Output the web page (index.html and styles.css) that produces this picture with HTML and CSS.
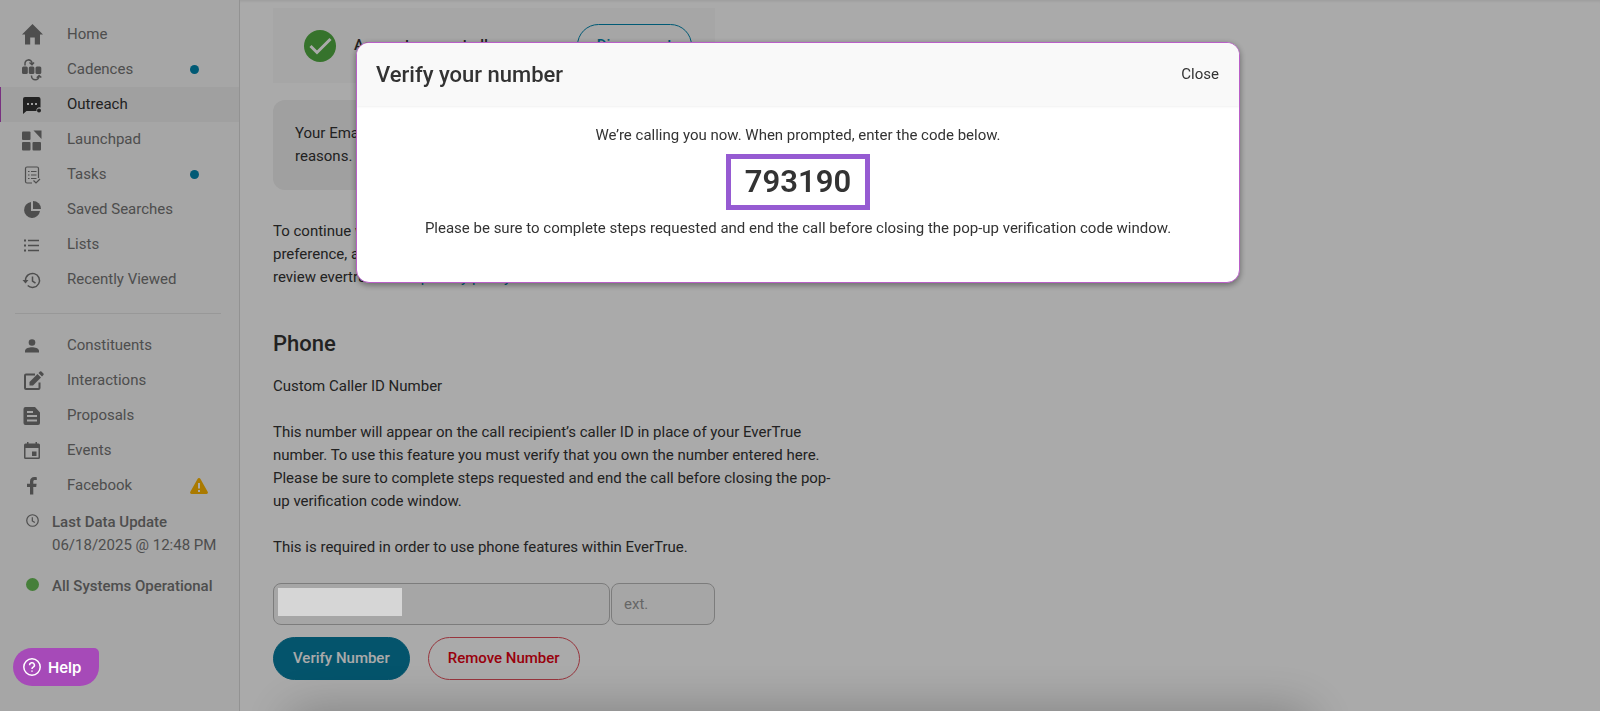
FILE: index.html
```html
<!DOCTYPE html>
<html lang="en">
<head>
    <meta charset="UTF-8">
    <meta name="viewport" content="width=device-width, initial-scale=1.0">
    <title>Outreach Settings</title>
    <link rel="stylesheet" href="styles.css">
</head>
<body>
    <div class="app">
        <aside class="sidebar">
            <nav>
                <a class="nav-item" href="#home">
                    <svg class="icon" viewBox="0 0 24 24"><path d="M12.500 1 2 11.500h3V21.500h5.200v-7h4.600v7H20V11.500h3z"/></svg>
                    <span>Home</span>
                </a>
                <a class="nav-item" href="#cadences">
                    <svg class="icon" viewBox="0 0 24 24">
                        <rect x="2" y="8.500" width="5.800" height="7.500" rx="1.500"/>
                        <rect x="8.800" y="8.500" width="5.600" height="7.500" rx="1.500"/>
                        <rect x="15.500" y="8.500" width="5.800" height="7.500" rx="1.500"/>
                        <path class="line thick" d="M5 7.500V5.800a3.500 3.500 0 0 1 7-.8v1M9.500 4.500 12 6.800l2-2.300M11.500 17.500v.5a3.800 3.800 0 0 0 7.600 0v-.5M16.800 19.800l2.300-2.300 2.200 2"/>
                    </svg>
                    <span>Cadences</span>
                    <i class="dot"></i>
                </a>
                <a class="nav-item active" href="#outreach">
                    <svg class="icon" viewBox="0 0 24 24">
                        <path d="M5 4h13.500a2 2 0 0 1 2 2v8.500a3 3 0 0 0-4 3.500H6.500L3 21V6a2 2 0 0 1 2-2z"/>
                        <circle cx="19" cy="17.500" r="2"/>
                        <path class="hole" d="M7 10h2v2H7zM11 10h2v2h-2zM15 10h2v2h-2z"/>
                    </svg>
                    <span>Outreach</span>
                </a>
                <a class="nav-item" href="#launchpad">
                    <svg class="icon" viewBox="0 0 24 24">
                        <rect x="2" y="3.500" width="8.500" height="8.500" rx="1"/>
                        <rect x="2" y="14" width="8.500" height="8.500" rx="1"/>
                        <rect x="12.500" y="14" width="8.500" height="8.500" rx="1"/>
                        <path d="M13.500 2.500H21.500V11z"/>
                    </svg>
                    <span>Launchpad</span>
                </a>
                <a class="nav-item" href="#tasks">
                    <svg class="icon" viewBox="0 0 24 24">
                        <path class="line" d="M18.500 15V5.500a1.500 1.500 0 0 0-1.500-1.500H7A1.500 1.500 0 0 0 5.500 5.500v13A1.500 1.500 0 0 0 7 20h5M8 8.500h1.500M11 8.500h5.500M8 12h1.500M11 12h5.500M8 15.500h1.500M11 15.500h5.500M13.500 17.500l2.500 2.500 4-4"/>
                    </svg>
                    <span>Tasks</span>
                    <i class="dot"></i>
                </a>
                <a class="nav-item" href="#saved">
                    <svg class="icon" viewBox="0 0 24 24"><path d="M11 4v9h9a8 8 0 1 1-9-9z"/><path d="M13 3a8 8 0 0 1 8 8h-8z"/></svg>
                    <span>Saved Searches</span>
                </a>
                <a class="nav-item" href="#lists">
                    <svg class="icon" viewBox="0 0 24 24"><path d="M4 6.500h2v2H4zM4 11.500h2v2H4zM4 16.500h2v2H4zM8 6.750h11v1.500H8zM8 11.750h11v1.500H8zM8 16.750h11v1.500H8z"/></svg>
                    <span>Lists</span>
                </a>
                <a class="nav-item" href="#recent">
                    <svg class="icon" viewBox="0 0 24 24">
                        <path class="line thick" d="M5.500 12.500a7 7 0 1 1 2.200 5M12.500 8.500V13l3 2.200"/>
                        <path d="M2.500 12h6l-3 3.500z"/>
                    </svg>
                    <span>Recently Viewed</span>
                </a>
                <hr class="divider">
                <a class="nav-item" href="#constituents">
                    <svg class="icon" viewBox="0 0 24 24"><circle cx="12" cy="8.500" r="3.300"/><path d="M5 18.500v-1.700c0-2.400 4.400-3.500 7-3.500s7 1.100 7 3.500v1.700z"/></svg>
                    <span>Constituents</span>
                </a>
                <a class="nav-item" href="#interactions">
                    <svg class="icon" viewBox="0 0 24 24">
                        <path class="line bold" d="M15 5.500H6a1 1 0 0 0-1 1V19a1 1 0 0 0 1 1h12.500a1 1 0 0 0 1-1v-5.500"/>
                        <path d="M9.500 16.500V13l8-8 3.500 3.500-8 8zM18.500 4l1.500-1.500a1 1 0 0 1 1.400 0l2 2a1 1 0 0 1 0 1.400L22 7.500z"/>
                    </svg>
                    <span>Interactions</span>
                </a>
                <a class="nav-item" href="#proposals">
                    <svg class="icon" viewBox="0 0 24 24"><path fill-rule="evenodd" d="M5.500 3H15l5 5.500V19a2 2 0 0 1-2 2H5.500a2 2 0 0 1-2-2V5a2 2 0 0 1 2-2zM7 7v2h6V7zM7 11v2h10v-2zM7 15.500v2h10v-2z"/></svg>
                    <span>Proposals</span>
                </a>
                <a class="nav-item" href="#events">
                    <svg class="icon" viewBox="0 0 24 24"><path fill-rule="evenodd" d="M7 3h1.500v1.500h7V3H17v1.500h1.500A1.500 1.500 0 0 1 20 6v12.500a1.500 1.500 0 0 1-1.500 1.500h-13A1.500 1.500 0 0 1 4 18.500V6a1.500 1.500 0 0 1 1.500-1.500H7zM5.500 9v9.500h13V9zM12 12.500h4.500V17H12z"/></svg>
                    <span>Events</span>
                </a>
                <a class="nav-item" href="#facebook">
                    <svg class="icon" viewBox="0 0 24 24"><path d="M10 20.500V13H7v-3.300h3V7.500C10 4.500 11.800 3 14.300 3c1.200 0 2.200.1 2.500.2v2.900H15c-1.400 0-1.700.7-1.700 1.600v2h3.300L16.200 13h-2.900v7.500z"/></svg>
                    <span>Facebook</span>
                    <svg class="warning" viewBox="0 0 18 18"><path d="M7.500 2a1.700 1.700 0 0 1 3 0l7 12.500A1.500 1.500 0 0 1 16.200 17H1.800A1.500 1.500 0 0 1 .5 14.500z"/><path class="mark" d="M8 6h2v5.500H8zM8 13h2v2H8z"/></svg>
                </a>
            </nav>
            <div class="status">
                <svg class="status-icon" viewBox="0 0 14 14"><circle cx="7" cy="7" r="6.200"/><path d="M6.800 3.500v4l2.700 1.600"/></svg>
                <div>
                    <strong>Last Data Update</strong>
                    <div>06/18/2025 @ 12:48 PM</div>
                </div>
            </div>
            <div class="status">
                <i class="status-dot"></i>
                <strong>All Systems Operational</strong>
            </div>
        </aside>

        <main class="content">
            <section class="account">
                <svg class="check" viewBox="0 0 32 32"><circle cx="16" cy="16" r="16"/><path d="m6.500 16 6.500 6.500L26.500 9"/></svg>
                <strong>Account connected!</strong>
                <button type="button" class="btn btn-outline">Disconnect</button>
            </section>
            <p class="notice">Your Email account must be reconnected from time to time for security<br>reasons.</p>
            <p class="text">To continue with a different account or to change your email<br>preference, account must be disconnected. For more information,<br>review evertrue’s data <a href="#privacy">privacy policy</a></p>

            <h2>Phone</h2>
            <label class="text" for="caller-id">Custom Caller ID Number</label>
            <p class="text">This number will appear on the call recipient’s caller ID in place of your EverTrue number. To use this feature you must verify that you own the number entered here. Please be sure to complete steps requested and end the call before closing the pop-up verification code window.</p>
            <p class="text">This is required in order to use phone features within EverTrue.</p>
            <form class="phone-form">
                <div class="fields">
                    <div class="number-field">
                        <input type="tel" id="caller-id">
                        <span class="mask"></span>
                    </div>
                    <input type="text" class="ext" placeholder="ext." aria-label="Extension">
                </div>
                <div class="actions">
                    <button type="button" class="btn btn-primary">Verify Number</button>
                    <button type="button" class="btn btn-danger">Remove Number</button>
                </div>
            </form>
        </main>
    </div>

    <div class="bottom-shadow"></div>

    <div class="overlay">
        <div class="modal" role="dialog" aria-labelledby="modal-title">
            <header class="modal-header">
                <h2 id="modal-title">Verify your number</h2>
                <button type="button" class="close">Close</button>
            </header>
            <div class="modal-body">
                <p>We’re calling you now. When prompted, enter the code below.</p>
                <div class="code">793190</div>
                <p>Please be sure to complete steps requested and end the call before closing the pop-up verification code window.</p>
            </div>
        </div>
    </div>

    <button type="button" class="help">
        <svg viewBox="0 0 20 20"><circle cx="10" cy="10" r="8.200"/><path d="M7.600 8.200a2.400 2.400 0 1 1 3.600 2c-.8.500-1.200.8-1.200 1.700M10 13.600v1.200"/></svg>
        Help
    </button>
</body>
</html>
```
FILE: styles.css
```css
* {
    box-sizing: border-box;
}
body {
    margin: 0;
    font-family: Roboto, sans-serif;
    font-size: 15px;
    line-height: 23px;
    color: #333;
    background-color: #fff;
    overflow: hidden;
}
h2 {
    margin: 0;
    font-size: 22px;
    font-weight: 500;
    line-height: 28px;
}
p {
    margin: 0;
}
strong {
    font-weight: 500;
}
button,
input {
    font: inherit;
}
button {
    cursor: pointer;
}
.app {
    display: flex;
    min-height: 100vh;
}

/* Sidebar */
.sidebar {
    flex: 0 0 240px;
    padding-top: 17px;
    background-color: #f9f9f9;
    border-right: 1px solid #dcdcdc;
    color: #757575;
}
.nav-item {
    display: grid;
    grid-template-columns: 24px 1fr 49px;
    column-gap: 23px;
    align-items: center;
    height: 35px;
    padding-left: 20px;
    color: inherit;
    text-decoration: none;
}
.nav-item span {
    margin-right: -23px;
}
.nav-item.active {
    background-color: #f1f1f1;
    box-shadow: inset 1px 0 #b44ac0;
    color: #333;
}
.icon {
    width: 24px;
    height: 24px;
    fill: currentColor;
}
.icon .line {
    fill: none;
    stroke: currentColor;
    stroke-width: 1.2;
}
.icon .thick {
    stroke-width: 1.5;
}
.icon .bold {
    stroke-width: 2;
}
.icon .hole {
    fill: #f1f1f1;
}
.dot {
    width: 9px;
    height: 9px;
    border-radius: 50%;
    background-color: #0087b0;
}
.warning {
    width: 18px;
    height: 18px;
    fill: #ffb800;
}
.warning .mark {
    fill: #fff;
}
.divider {
    margin: 16px 18px 14px 15px;
    border: 0;
    border-top: 1px solid #e4e4e4;
}
.status {
    display: flex;
    align-items: baseline;
    gap: 13px;
    margin-top: 8px;
    padding-left: 26px;
    white-space: nowrap;
}
.status + .status {
    margin-top: 18px;
}
.status-icon {
    flex: none;
    width: 13px;
    height: 13px;
    fill: none;
    stroke: #757575;
    stroke-width: 1.3;
}
.status-dot {
    width: 13px;
    height: 13px;
    border-radius: 50%;
    background-color: #6abf57;
}

/* Main content */
.content {
    flex: 1;
    padding: 8px 33px 30px;
    box-shadow: inset 0 3px 3px -2px #e8e8e8;
}
.account {
    display: flex;
    align-items: center;
    gap: 18px;
    max-width: 442px;
    height: 75px;
    padding: 0 23px 0 31px;
    background-color: #f9f9f9;
}
.account .btn {
    margin-left: auto;
}
.check {
    width: 32px;
    height: 32px;
    fill: #52ad42;
}
.check path {
    fill: none;
    stroke: #fff;
    stroke-width: 3;
}
.notice {
    max-width: 580px;
    min-height: 90px;
    margin: 17px 0 30px;
    padding: 22px;
    border-radius: 12px;
    background-color: #f0f0f0;
}
.text {
    display: block;
    max-width: 570px;
    margin-bottom: 23px;
}
.text a {
    color: #0087b0;
    text-decoration: none;
}
.content h2 {
    margin: 41px 0 17px;
}
.phone-form {
    margin-top: 24px;
}
.fields {
    display: flex;
    gap: 1px;
    max-width: 442px;
}
.number-field {
    position: relative;
    flex: 1;
}
.fields input {
    width: 100%;
    height: 42px;
    padding: 0 12px;
    border: 1px solid #bbb;
    border-radius: 8px;
    background-color: #f9f9f9;
}
.fields .ext {
    width: 104px;
}
.ext::placeholder {
    color: #999;
}
.mask {
    position: absolute;
    z-index: 20;
    top: 5px;
    left: 5px;
    width: 124px;
    height: 28px;
    background-color: #d6d6d6;
}
.actions {
    display: flex;
    gap: 18px;
    margin-top: 12px;
}
.btn {
    height: 43px;
    padding: 0 19px;
    border: 1px solid;
    border-radius: 22px;
    background-color: transparent;
    font-weight: 500;
}
.btn-outline {
    border-color: #0087b0;
    color: #0087b0;
}
.btn-primary {
    border-color: #067ea2;
    background-color: #067ea2;
    color: #fff;
}
.btn-danger {
    border-color: #e4505c;
    color: #e60012;
}
.bottom-shadow {
    position: fixed;
    top: 100%;
    left: 290px;
    right: 290px;
    height: 60px;
    box-shadow: 0 0 50px rgba(0, 0, 0, 0.26);
}

/* Modal */
.overlay {
    position: fixed;
    z-index: 10;
    inset: 0;
    padding: 42px 4px 0 0;
    background-color: rgba(0, 0, 0, 0.333);
}
.modal {
    max-width: 884px;
    margin: 0 auto;
    border: 1px solid #b95fc8;
    border-radius: 13px;
    background-color: #fff;
    box-shadow: 0 2px 6px rgba(0, 0, 0, 0.4);
    overflow: hidden;
}
.modal-header {
    display: flex;
    justify-content: space-between;
    align-items: center;
    height: 63px;
    padding: 0 20px 0 19px;
    background-color: #f9f9f9;
    box-shadow: 0 1px 2px rgba(0, 0, 0, 0.06);
}
.close {
    padding: 0;
    border: 0;
    background: none;
    color: #333;
}
.modal-body {
    display: flex;
    flex-direction: column;
    align-items: center;
    gap: 7px;
    padding: 18px 18px 42px;
    text-align: center;
}
.code {
    padding: 0 14px;
    border: 5px solid #965bd2;
    font-size: 31px;
    font-weight: 600;
    line-height: 46px;
}

/* Help launcher */
.help {
    position: fixed;
    z-index: 20;
    left: 13px;
    bottom: 25px;
    display: flex;
    align-items: center;
    gap: 6px;
    height: 38px;
    padding: 0 18px 0 9px;
    border: 0;
    border-radius: 19px 5px 19px 19px;
    background-color: #a64ab8;
    color: #fff;
    font-family: Inter, sans-serif;
    font-weight: 600;
}
.help svg {
    width: 20px;
    height: 20px;
    fill: none;
    stroke: #fff;
    stroke-width: 1.5;
}
```
